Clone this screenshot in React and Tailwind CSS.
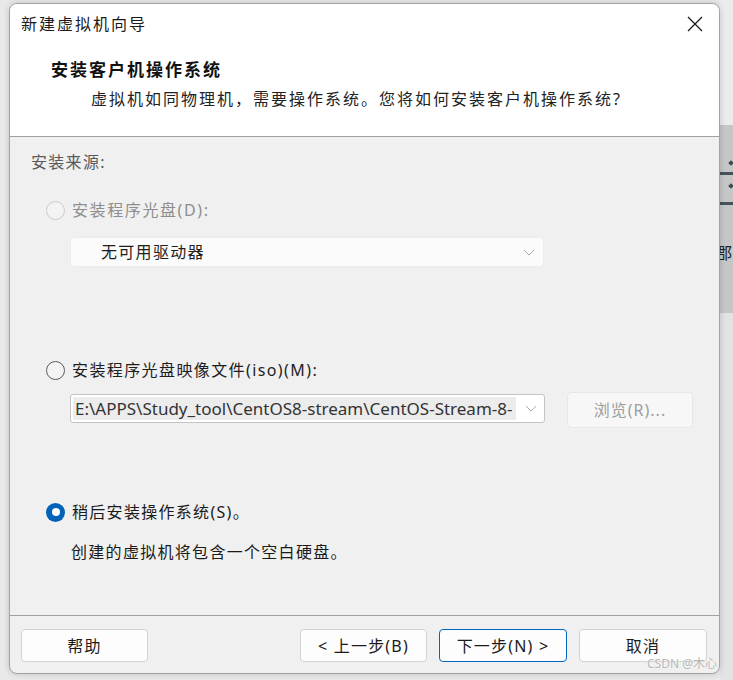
import React from "react";

const FONT = { fontFamily: '"Noto Sans", "Noto Sans CJK SC", sans-serif' };

function Chevron() {
  return (
    <svg width="12" height="7" viewBox="0 0 12 7" className="shrink-0">
      <path d="M1 1 L6 6 L11 1" fill="none" stroke="#a8a8a8" strokeWidth="1" />
    </svg>
  );
}

function Radio({ state }) {
  if (state === "checked") {
    return (
      <div className="w-[19px] h-[19px] rounded-full bg-[#0063b8] flex items-center justify-center shrink-0">
        <div className="w-[8px] h-[8px] rounded-full bg-white" />
      </div>
    );
  }
  if (state === "disabled") {
    return <div className="w-[19px] h-[19px] rounded-full border border-[#cbcbcb] bg-[#f3f3f3] shrink-0" />;
  }
  return <div className="w-[19px] h-[19px] rounded-full border border-[#5a5a5a] bg-[#f3f3f3] shrink-0" />;
}

function Btn({ children, w, primary }) {
  return (
    <div
      className={
        "h-[33px] rounded-[4px] bg-[#fdfdfd] flex items-center justify-center text-[16px] tracking-[1.2px] text-[#1b1b1b] " +
        w +
        (primary ? " border border-[#0067c0]" : " border border-[#d2d2d2]")
      }
    >
      {children}
    </div>
  );
}

export default function App() {
  return (
    <div className="w-[733px] h-[680px] bg-[#e9e9e9] flex overflow-hidden relative" style={FONT}>
      <div className="w-[9px] shrink-0" />
      <div className="relative z-10 mt-[3px] w-[711px] h-[671px] shrink-0 rounded-[8px] border border-[#a3a3a3] bg-[#f0f0f0] shadow-[0_0_6px_rgba(0,0,0,0.18)] flex flex-col overflow-hidden">
        {/* header */}
        <div className="h-[133px] shrink-0 bg-white border-b border-[#a0a0a0]">
          <div className="pt-[8px] h-[32px] flex items-center justify-between pl-[11px] pr-[16px]">
            <span className="text-[16px] leading-[24px] tracking-[2px] text-[#1a1a1a]">新建虚拟机向导</span>
            <svg width="16" height="16" viewBox="0 0 16 16">
              <path d="M1 1 L15 15 M15 1 L1 15" stroke="#1a1a1a" strokeWidth="1.3" fill="none" />
            </svg>
          </div>
          <div className="mt-[22px] pl-[41px] text-[17px] leading-[24px] font-bold tracking-[2px] text-[#111]">
            安装客户机操作系统
          </div>
          <div className="mt-[5px] pl-[81px] text-[16px] leading-[24px] tracking-[2px] text-[#222]">
            虚拟机如同物理机，需要操作系统。您将如何安装客户机操作系统?
          </div>
        </div>

        {/* body */}
        <div className="h-[479px] shrink-0 border-b border-[#a0a0a0] flex flex-col">
          <div className="mt-[13px] pl-[21px] text-[16px] leading-[24px] tracking-[1.3px] text-[#5a5a5a]">安装来源:</div>

          <div className="mt-[24px] pl-[36px] h-[24px] flex items-center gap-[7px]">
            <Radio state="disabled" />
            <span className="text-[16px] leading-[24px] tracking-[1.6px] text-[#8e8e8e]">安装程序光盘(D):</span>
          </div>

          <div className="mt-[15px] ml-[60px] w-[474px] h-[30px] bg-[#fbfbfb] border border-[#ececec] rounded-[3px] flex items-center justify-between pl-[30px] pr-[8px]">
            <span className="text-[16px] tracking-[1.3px] text-[#1e1e1e]">无可用驱动器</span>
            <Chevron />
          </div>

          <div className="mt-[91px] pl-[36px] h-[24px] flex items-center gap-[7px]">
            <Radio state="normal" />
            <span className="text-[16px] leading-[24px] tracking-[1.4px] text-[#1e1e1e]">安装程序光盘映像文件(iso)(M):</span>
          </div>

          <div className="mt-[10px] ml-[60px] flex items-start">
            <div className="mt-[2px] w-[475px] h-[29px] bg-white border border-[#c4c4c4] rounded-[3px] flex items-center pl-[2px] pr-[7px]">
              <div className="w-[443px] h-[23px] bg-[#ececec] overflow-hidden whitespace-nowrap pl-[2px] text-[17px] leading-[23px] text-[#333]">
                E:\APPS\Study_tool\CentOS8-stream\CentOS-Stream-8-
              </div>
              <div className="flex-1" />
              <Chevron />
            </div>
            <div className="ml-[22px] w-[126px] h-[36px] rounded-[4px] bg-[#f7f7f7] border border-[#e6e6e6] flex items-center justify-center text-[16px] tracking-[1px] text-[#9d9d9d]">
              浏览(R)...
            </div>
          </div>

          <div className="mt-[72px] pl-[36px] h-[24px] flex items-center gap-[7px]">
            <Radio state="checked" />
            <span className="text-[16px] leading-[24px] tracking-[1.3px] text-[#1a1a1a]">稍后安装操作系统(S)。</span>
          </div>

          <div className="mt-[16px] pl-[61px] text-[16px] leading-[24px] tracking-[1.3px] text-[#1a1a1a]">
            创建的虚拟机将包含一个空白硬盘。
          </div>
        </div>

        {/* footer */}
        <div className="flex-1 flex items-start pt-[13px]">
          <div className="ml-[11px]">
            <Btn w="w-[127px]">帮助</Btn>
          </div>
          <div className="flex-1" />
          <Btn w="w-[127px]">&lt; 上一步(B)</Btn>
          <div className="w-[12px]" />
          <Btn w="w-[128px]" primary>下一步(N) &gt;</Btn>
          <div className="w-[12px]" />
          <Btn w="w-[128px]">取消</Btn>
          <div className="w-[12px]" />
        </div>

        <div className="absolute right-[2px] bottom-[1px] text-[12px] leading-[16px] text-[#b8b8b8] [text-shadow:0_0_2px_#ffffff]">
          CSDN @木心
        </div>
      </div>

      {/* background window strip */}
      <div className="w-[13px] shrink-0 flex flex-col">
        <div className="h-[125px] bg-[#ececec]" />
        <div className="h-[188px] bg-[#c6c6c6] flex flex-col overflow-hidden">
          <div className="mt-[36px] ml-[9px] w-[4px] h-[4px] bg-[#3f4a55] rotate-45" />
          <div className="mt-[7px] h-[3px] bg-[#48525c]" />
          <div className="mt-[9px] ml-[9px] w-[4px] h-[4px] bg-[#3f4a55] rotate-45" />
          <div className="mt-[14px] h-[3px] bg-[#48525c]" />
          <div className="mt-[38px] -ml-[4px] text-[16px] leading-[20px] text-[#222] whitespace-nowrap">郡</div>
        </div>
        <div className="flex-1 bg-[#e3e3e3]" />
      </div>
    </div>
  );
}
